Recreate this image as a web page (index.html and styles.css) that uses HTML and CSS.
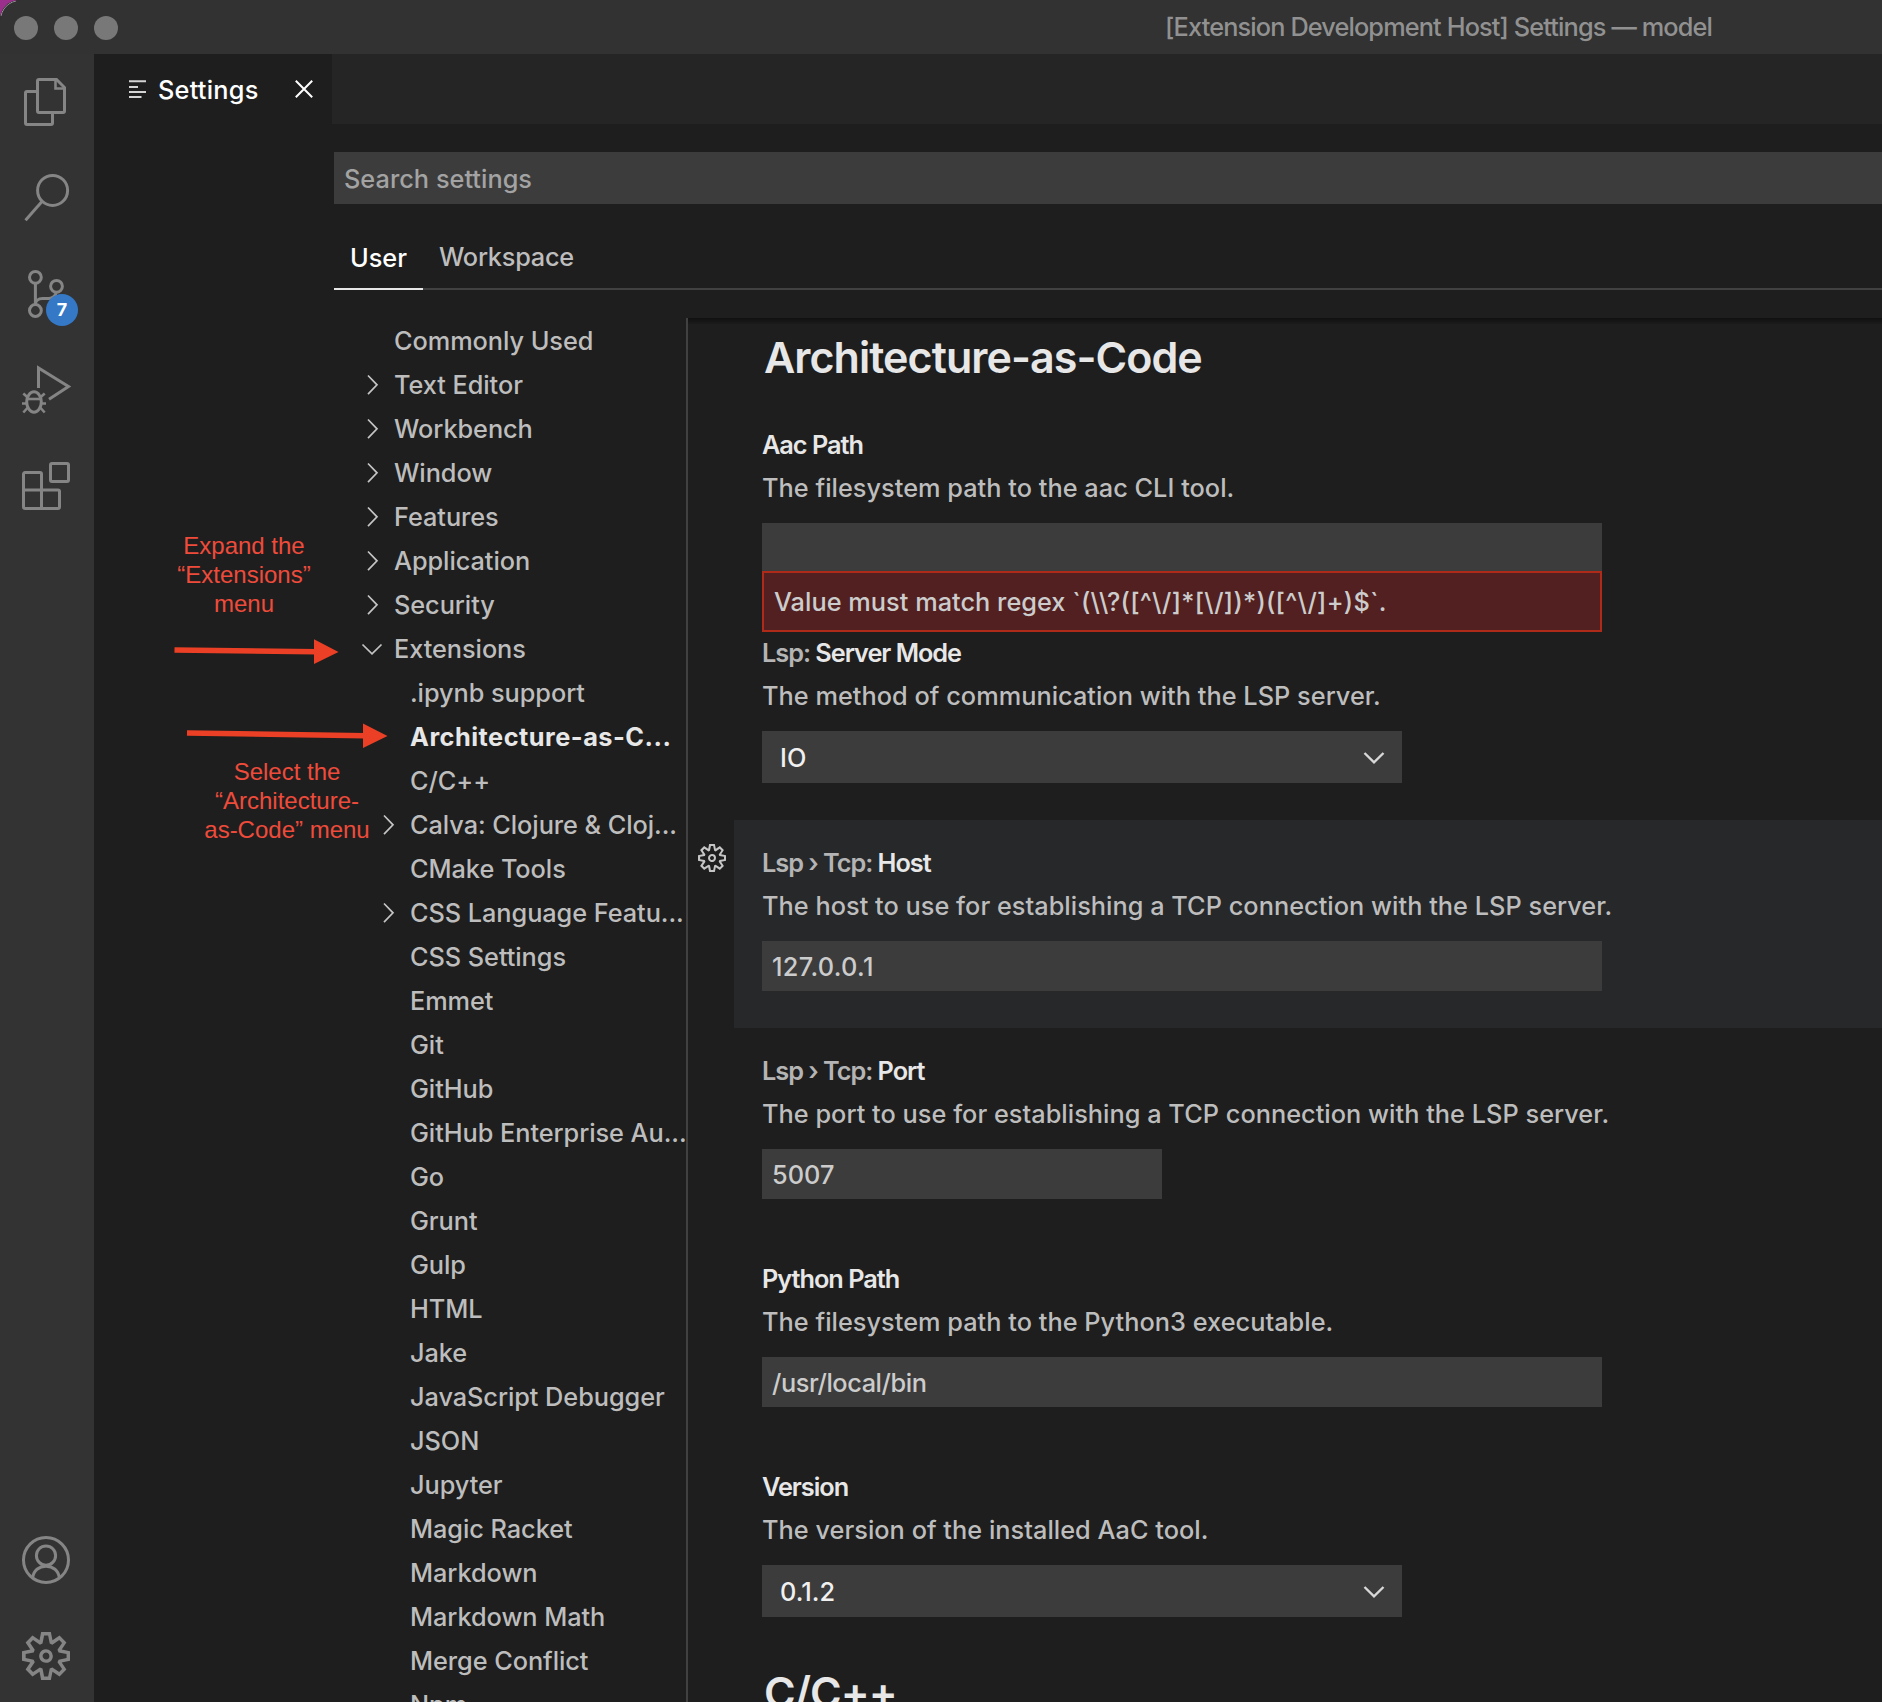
FILE: index.html
```html
<!DOCTYPE html>
<html lang="en">
<head>
<meta charset="utf-8">
<title>Settings — model</title>
<link rel="stylesheet" href="styles.css">
</head>
<body>
<svg class="defs" width="0" height="0" aria-hidden="true">
  <symbol id="right" viewBox="0 0 32 32"><path d="M12 6.5l9 9.3-9 9.3" fill="none" stroke="currentColor" stroke-width="1.7"/></symbol>
  <symbol id="down" viewBox="0 0 32 32"><path d="M6.5 11.5l9.5 9.3 9.5-9.3" fill="none" stroke="currentColor" stroke-width="1.7"/></symbol>
  <symbol id="down-bold" viewBox="0 0 32 32"><path d="M6.5 11l9.5 9.3 9.5-9.3" fill="none" stroke="currentColor" stroke-width="2.4"/></symbol>
  <symbol id="gear" viewBox="0 0 24 24"><path fill="currentColor" fill-rule="evenodd" d="M19.85 8.75l4.15.83v4.84l-4.15.83 2.35 3.52-3.43 3.43-3.52-2.35-.83 4.15H9.58l-.83-4.15-3.52 2.35-3.43-3.43 2.35-3.52L0 14.42V9.58l4.15-.83L1.8 5.23 5.23 1.8l3.52 2.35L9.58 0h4.84l.83 4.15 3.52-2.35 3.43 3.43-2.35 3.52zm-1.57 5.07l4-.81v-2l-4-.81-.54-1.3 2.29-3.43-1.43-1.43-3.43 2.29-1.3-.54-.81-4h-2l-.81 4-1.3.54-3.43-2.29-1.43 1.43L6.38 8.9l-.54 1.3-4 .81v2l4 .81.54 1.3-2.29 3.43 1.43 1.43 3.43-2.29 1.3.54.81 4h2l.81-4 1.3-.54 3.43 2.29 1.43-1.43-2.29-3.43.54-1.3zm-8.186-4.672A3.43 3.43 0 0 1 12 8.57 3.44 3.44 0 0 1 15.43 12a3.43 3.43 0 1 1-5.336-2.852zm.956 4.274c.281.188.612.288.95.288A1.7 1.7 0 0 0 13.71 12a1.71 1.71 0 1 0-2.66 1.422z"/></symbol>
</svg>
<div class="window">
  <header class="titlebar">
    <div class="lights"><i></i><i></i><i></i></div>
    <div class="window-title">[Extension Development Host] Settings — model</div>
  </header>
  <div class="body">
    <nav class="activity">
      <div class="act"><svg viewBox="0 0 48 48"><path d="M17 1.5h17.5l8 8V33a1.5 1.5 0 0 1-1.5 1.5H17a1.5 1.5 0 0 1-1.5-1.5V3A1.5 1.5 0 0 1 17 1.5z"/><path d="M33.5 1.5v9h9" stroke-width="2.6"/><path d="M15 13.5H5A1.5 1.5 0 0 0 3.5 15v30A1.5 1.5 0 0 0 5 46.5h24a1.5 1.5 0 0 0 1.5-1.5V35"/></svg></div>
      <div class="act"><svg viewBox="0 0 48 48"><circle cx="30.6" cy="16.4" r="15"/><path d="M20 27.5L3.5 46.2"/></svg></div>
      <div class="act"><svg viewBox="0 0 48 48"><circle cx="13.4" cy="7.3" r="5.9"/><circle cx="34.5" cy="16.3" r="5.9"/><circle cx="13.4" cy="40.5" r="5.9"/><path d="M13.4 13v21.5c0-3.5 3-6 7-6h6.5c4 0 6.5-2.3 7.4-6.3"/></svg><span class="count">7</span></div>
      <div class="act"><svg viewBox="0 0 48 48"><path d="M16.5 22V2L46.5 20.5 27 33.2"/><ellipse cx="12" cy="36" rx="7.3" ry="10.2"/><path d="M4.5 33h15" stroke-width="2.6"/><path d="M0 37.5h4.5M19.5 37.5H24M1.3 27.500l4.500 4M22.700 27.500l-4.500 4M1.300 46.500l5-5.500M22.700 46.500l-5-5.500" stroke-width="2.6"/></svg></div>
      <div class="act"><svg viewBox="0 0 48 48"><rect x="28.5" y="1.5" width="18" height="18" rx="1.5"/><path d="M1.5 28V12A1.5 1.5 0 0 1 3 10.5h15a1.5 1.5 0 0 1 1.5 1.5v34.5M1.5 28H36a1.5 1.5 0 0 1 1.5 1.5V45a1.5 1.5 0 0 1-1.5 1.5H3A1.5 1.5 0 0 1 1.5 45z"/></svg></div>
      <div class="spacer"></div>
      <div class="act"><svg viewBox="0 0 48 48"><circle cx="24" cy="24" r="22.5"/><circle cx="24" cy="19.6" r="9.6"/><path d="M10.7 41.8C11.5 34.5 17 30.2 24 30.2s12.5 4.3 13.3 11.6"/></svg></div>
      <div class="act gearbox"><svg viewBox="0 0 24 24"><use href="#gear"/></svg></div>
    </nav>
    <main class="editor">
      <div class="tabs">
        <div class="tab">
          <svg class="tab-icon" width="18" height="18" viewBox="0 0 18 18"><path d="M0 1.3h17M0 7h9M0 12h17M0 17h12.5" stroke="currentColor" stroke-width="2"/></svg>
          <span class="tab-name">Settings</span>
          <svg class="tab-close" width="18" height="18" viewBox="0 0 18 18"><path d="M.8.8l16.4 16.4M17.2.8L.8 17.2" stroke="currentColor" stroke-width="2"/></svg>
        </div>
      </div>
      <div class="page">
        <div class="search">Search settings</div>
        <div class="scopes"><div class="scope active">User</div><div class="scope">Workspace</div></div>
        <div class="split">
          <ul class="toc">
            <li><i></i>Commonly Used</li>
            <li><svg><use href="#right"/></svg>Text Editor</li>
            <li><svg><use href="#right"/></svg>Workbench</li>
            <li><svg><use href="#right"/></svg>Window</li>
            <li><svg><use href="#right"/></svg>Features</li>
            <li><svg><use href="#right"/></svg>Application</li>
            <li><svg><use href="#right"/></svg>Security</li>
            <li><svg><use href="#down"/></svg>Extensions</li>
            <li class="sub"><i></i>.ipynb support</li>
            <li class="sub selected"><i></i>Architecture-as-C...</li>
            <li class="sub"><i></i>C/C++</li>
            <li class="sub"><svg><use href="#right"/></svg>Calva: Clojure &amp; Cloj...</li>
            <li class="sub"><i></i>CMake Tools</li>
            <li class="sub"><svg><use href="#right"/></svg>CSS Language Featu...</li>
            <li class="sub"><i></i>CSS Settings</li>
            <li class="sub"><i></i>Emmet</li>
            <li class="sub"><i></i>Git</li>
            <li class="sub"><i></i>GitHub</li>
            <li class="sub"><i></i>GitHub Enterprise Au...</li>
            <li class="sub"><i></i>Go</li>
            <li class="sub"><i></i>Grunt</li>
            <li class="sub"><i></i>Gulp</li>
            <li class="sub"><i></i>HTML</li>
            <li class="sub"><i></i>Jake</li>
            <li class="sub"><i></i>JavaScript Debugger</li>
            <li class="sub"><i></i>JSON</li>
            <li class="sub"><i></i>Jupyter</li>
            <li class="sub"><i></i>Magic Racket</li>
            <li class="sub"><i></i>Markdown</li>
            <li class="sub"><i></i>Markdown Math</li>
            <li class="sub"><i></i>Merge Conflict</li>
            <li class="sub"><i></i>Npm</li>
          </ul>
          <div class="settings">
            <h2>Architecture-as-Code</h2>
            <section class="item">
              <h3>Aac Path</h3>
              <p>The filesystem path to the aac CLI tool.</p>
              <div class="input"><div class="error">Value must match regex <span class="regex">`(\\?([^\/]*[\/])*)([^\/]+)$`.</span></div></div>
            </section>
            <section class="item">
              <h3><span>Lsp:</span> Server Mode</h3>
              <p>The method of communication with the LSP server.</p>
              <div class="select">IO<svg><use href="#down-bold"/></svg></div>
            </section>
            <section class="item focused">
              <svg class="item-gear" viewBox="0 0 24 24"><use href="#gear"/></svg>
              <h3><span>Lsp › Tcp:</span> Host</h3>
              <p>The host to use for establishing a TCP connection with the LSP server.</p>
              <div class="input address">127.0.0.1</div>
            </section>
            <section class="item">
              <h3><span>Lsp › Tcp:</span> Port</h3>
              <p>The port to use for establishing a TCP connection with the LSP server.</p>
              <div class="input number">5007</div>
            </section>
            <section class="item">
              <h3>Python Path</h3>
              <p>The filesystem path to the Python3 executable.</p>
              <div class="input path">/usr/local/bin</div>
            </section>
            <section class="item">
              <h3>Version</h3>
              <p>The version of the installed AaC tool.</p>
              <div class="select">0.1.2<svg><use href="#down-bold"/></svg></div>
            </section>
            <h2>C/C++</h2>
          </div>
        </div>
      </div>
    </main>
  </div>
</div>
<div class="note note-expand">Expand the<br>“Extensions”<br>menu</div>
<div class="note note-select">Select the<br>“Architecture-<br>as-Code” menu</div>
<svg class="arrows" width="240" height="130" viewBox="160 630 240 130">
  <path d="M174.5 650L316 651.7M187 733L365 735.7" stroke="#eb4025" stroke-width="5.5"/>
  <path d="M314 639.3L338.5 652 314 664zM363 723.5L387.5 736 363 748z" fill="#eb4025"/>
</svg>
</body>
</html>
```
FILE: styles.css
```css
* { box-sizing: border-box; }
body {
  margin: 0;
  width: 1882px;
  height: 1702px;
  overflow: hidden;
  position: relative;
  background: #9a2f8c;
  color: #bdbdbd;
  font: 450 25.3px/44px Inter, "Liberation Sans", sans-serif;
  letter-spacing: 0.03px;
}
.defs { position: absolute; }
svg { flex: none; }

.window {
  height: 1702px;
  overflow: hidden;
  border-top-left-radius: 20px;
  background: #1e1e1e;
  display: flex;
  flex-direction: column;
}
.titlebar {
  position: relative;
  height: 54px;
  flex: none;
  display: flex;
  align-items: center;
  background: #323232;
  padding-left: 14px;
  color: #919191;
}
.titlebar::before {
  content: "";
  position: absolute;
  left: 0;
  top: 0;
  width: 40px;
  height: 40px;
  border: 1.5px solid #999;
  border-radius: 20px;
  clip-path: inset(0 26px 26px 0);
}
.lights { display: flex; gap: 16px; padding-top: 2px; }
.lights i { width: 24px; height: 24px; border-radius: 50%; background: #787878; }
.window-title { margin-left: 1047px; margin-top: -1px; white-space: nowrap; letter-spacing: -0.87px; }

.body { flex: 1; display: flex; min-height: 0; }
.activity {
  width: 94px;
  height: 1650px;
  flex: none;
  display: flex;
  flex-direction: column;
  background: #333;
  color: #858585;
}
.act { position: relative; height: 96px; padding: 24px 22px; flex: none; }
.act svg {
  display: block;
  width: 48px;
  height: 48px;
  overflow: visible;
  fill: none;
  stroke: currentColor;
  stroke-width: 3;
}
.act.gearbox svg { stroke: none; }
.spacer { flex: 1; }
.count {
  position: absolute;
  left: 46px;
  top: 48px;
  width: 32px;
  height: 32px;
  border-radius: 50%;
  background: #3478c6;
  color: #fff;
  font-size: 18px;
  font-weight: 700;
  line-height: 32px;
  text-align: center;
}

.editor { flex: 1; min-width: 0; display: flex; flex-direction: column; }
.tabs { height: 70px; flex: none; background: #252526; display: flex; }
.tab {
  width: 238px;
  background: #1e1e1e;
  color: #fff;
  display: flex;
  align-items: center;
  padding-left: 35px;
}
.tab-icon { color: #d4d4d4; }
.tab-name { width: 137px; margin-left: 11px; padding-top: 2px; letter-spacing: 0.25px; }

.page { padding: 28px 0 0 240px; flex: 1; display: flex; flex-direction: column; min-height: 0; }
.search {
  height: 52px;
  flex: none;
  background: #3c3c3c;
  color: #a3a3a3;
  padding-left: 10px;
  line-height: 53px;
}
.scopes {
  height: 86px;
  flex: none;
  display: flex;
  border-bottom: 2px solid #414141;
  padding-top: 30px;
}
.scope { padding: 1px 14px 0 16px; height: 56px; letter-spacing: -0.23px; }
.scope.active { width: 89px; color: #fff; padding-top: 2px; border-bottom: 2px solid #e7e7e7; letter-spacing: 0; }

.split { flex: 1; display: flex; margin-top: 28px; min-height: 0; }
.toc {
  width: 354px;
  flex: none;
  margin: 0;
  padding: 1px 0 0;
  list-style: none;
  border-right: 2px solid #414141;
  white-space: nowrap;
  letter-spacing: -0.05px;
}
.toc li { height: 44px; display: flex; align-items: center; padding-left: 22px; }
.toc li.sub { padding-left: 38px; }
.toc i, .toc svg { width: 32px; height: 32px; flex: none; margin-right: 6px; }
.toc svg { color: #c5c5c5; }
.toc .selected { color: #e7e7e7; font-weight: 700; letter-spacing: 0.5px; }

.settings {
  flex: 1;
  min-width: 0;
  overflow: hidden;
  padding-top: 1px;
  background: linear-gradient(#101010, #1b1b1b 6px, #1e1e1e 6px);
}
.settings h2 {
  margin: 0;
  height: 83px;
  padding: 13px 0 0 76px;
  font-size: 43px;
  font-weight: 620;
  line-height: 50px;
  letter-spacing: -0.95px;
  color: #e7e7e7;
}
.item { position: relative; height: 208px; margin-left: 46px; padding: 25px 0 0 28px; }
.item:has(.select) { height: 210px; }
.item.focused { background: #26282a; }
.item h3 {
  margin: 0;
  height: 36px;
  font-size: 25.3px;
  font-weight: 620;
  line-height: 36px;
  letter-spacing: -1.03px;
  color: #e7e7e7;
}
.item h3 span { color: #b4b4b4; }
.item p { margin: 0; height: 60px; padding-top: 5px; line-height: 40px; white-space: nowrap; }
.input {
  position: relative;
  width: 840px;
  height: 50px;
  background: #3c3c3c;
  color: #ccc;
  padding-left: 10px;
  line-height: 51px;
}
.input.number { width: 400px; }
.input.address { letter-spacing: 0.35px; }
.input.path { letter-spacing: -0.42px; }
.error {
  position: absolute;
  z-index: 1;
  left: 0;
  top: 48px;
  width: 840px;
  height: 61px;
  border: 2px solid #b02a1a;
  background: #522020;
  padding-left: 10px;
  line-height: 58px;
  white-space: nowrap;
}
.regex { letter-spacing: 0.25px; }
.select {
  width: 640px;
  height: 52px;
  display: flex;
  align-items: center;
  justify-content: space-between;
  padding: 1px 12px 0 18px;
  background: #3c3c3c;
  color: #f0f0f0;
}
.select svg { width: 32px; height: 32px; color: #d8d8d8; }
.item-gear { position: absolute; left: -36px; top: 24px; width: 28px; height: 28px; color: #c5c5c5; }

.note {
  position: absolute;
  width: 180px;
  text-align: center;
  font: 24px/29px "Liberation Sans", Arial, sans-serif;
  letter-spacing: 0;
  color: #ee4b3b;
}
.note-expand { left: 154px; top: 531px; }
.note-select { left: 197px; top: 757px; }
.arrows { position: absolute; left: 160px; top: 630px; }
```
